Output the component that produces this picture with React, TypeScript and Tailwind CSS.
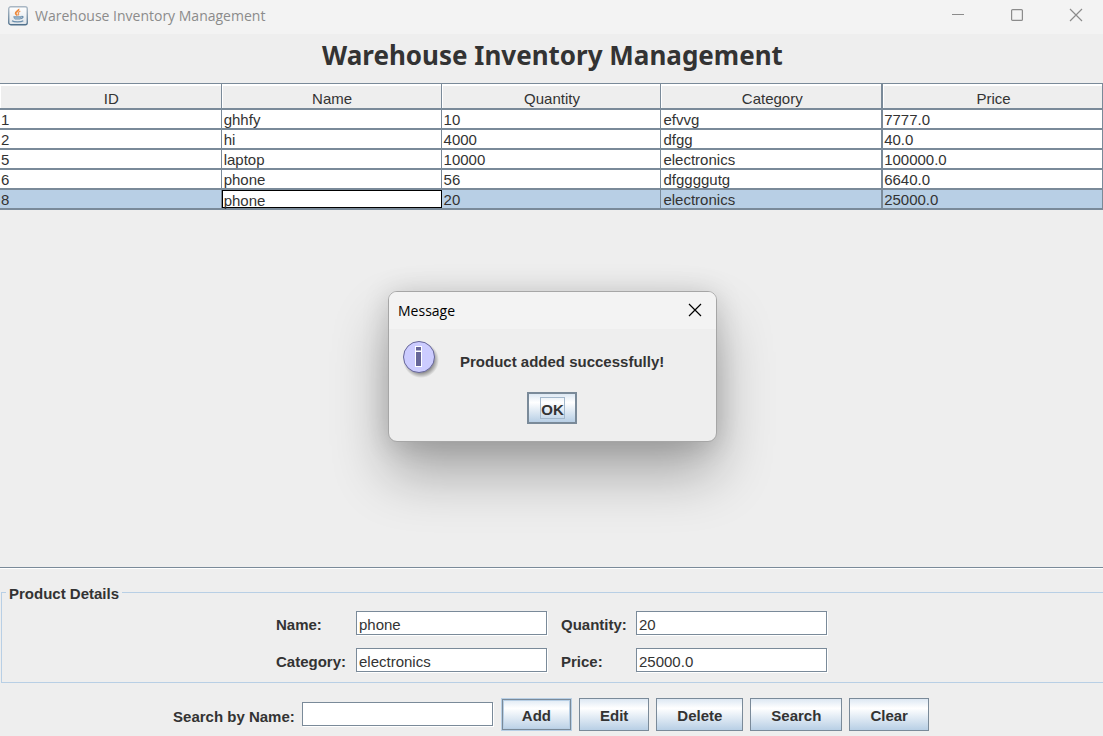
import type { ReactNode } from "react";

type Product = {
  id: number;
  name: string;
  quantity: string;
  category: string;
  price: string;
};

const products: Product[] = [
  { id: 1, name: "ghhfy", quantity: "10", category: "efvvg", price: "7777.0" },
  { id: 2, name: "hi", quantity: "4000", category: "dfgg", price: "40.0" },
  { id: 5, name: "laptop", quantity: "10000", category: "electronics", price: "100000.0" },
  { id: 6, name: "phone", quantity: "56", category: "dfggggutg", price: "6640.0" },
  { id: 8, name: "phone", quantity: "20", category: "electronics", price: "25000.0" },
];

const selectedId = 8;

function JavaIcon() {
  return (
    <svg width="20" height="20" viewBox="0 0 20 20" aria-hidden="true">
      <defs>
        <linearGradient id="java-tile" x1="0" y1="0" x2="0" y2="1">
          <stop offset="0" stopColor="#ffffff" />
          <stop offset="1" stopColor="#dfe4e9" />
        </linearGradient>
        <linearGradient id="java-edge" x1="0" y1="0" x2="0" y2="1">
          <stop offset="0" stopColor="#a9b7c4" />
          <stop offset="1" stopColor="#4f708c" />
        </linearGradient>
      </defs>
      <rect x="0.75" y="0.75" width="18.5" height="18" rx="2" fill="url(#java-tile)" stroke="url(#java-edge)" strokeWidth="1.3" />
      <path d="M10.6 2.8c.9 2-3.4 2.700-3 4.500.2 1 1.300 1.500 1.800 2.200" fill="none" stroke="#ee8a3c" strokeWidth="1.700" />
      <path d="M12.300 5.100c-1.800.8-2.500 1.500-1.900 2.300.5.7.4 1.200-.2 1.900" fill="none" stroke="#ee9a5c" strokeWidth="1.300" />
      <path d="M5.300 10.300h8.200c-.2 2-.8 2.700-1.500 3.200H7.200c-.9-.5-1.700-1.300-1.900-3.200z" fill="#7396b3" />
      <path d="M13.300 10.500c2.500-.5 2.500 1.700-.8 2.200M4 14.800c1.800 1.500 9.300 1.500 11.300 0" fill="none" stroke="#6a8eac" strokeWidth="1.200" />
      <path d="M6.500 12h6" stroke="#e8eef3" strokeWidth=".6" />
    </svg>
  );
}

function InfoIcon() {
  return (
    <svg width="38" height="40" viewBox="0 0 38 40" aria-hidden="true">
      <defs>
        <radialGradient id="info-shadow">
          <stop offset="0.7" stopColor="#000" stopOpacity=".4" />
          <stop offset="1" stopColor="#000" stopOpacity="0" />
        </radialGradient>
      </defs>
      <circle cx="19" cy="20" r="18" fill="url(#info-shadow)" />
      <circle cx="17" cy="17" r="15.500" fill="#ccccff" stroke="#666699" />
      <path d="M13 6h7v21h-7z" fill="#ffffff" />
      <path d="M14 7h5v3.500h-5zM14 12h5v14h-5z" fill="#666699" />
    </svg>
  );
}

function CloseGlyph() {
  return (
    <svg width="14" height="14" viewBox="0 0 14 14" fill="none" stroke="currentColor" strokeWidth="1.200" aria-hidden="true">
      <path d="M1 1l12 12M13 1L1 13" />
    </svg>
  );
}

function TitleBar() {
  return (
    <header className="flex h-[34px] shrink-0 items-start bg-[#f3f3f3] pl-2 text-[#8b8b8b]">
      <div className="flex h-[31px] items-center gap-[7px]">
        <JavaIcon />
        <span className="font-['Open_Sans','Noto_Sans',sans-serif] text-[14px] leading-5">
          Warehouse Inventory Management
        </span>
      </div>
      <div className="mr-[3px] ml-auto flex gap-[11px]">
        <button type="button" aria-label="Minimize" className="flex h-[30px] w-12 items-center justify-center">
          <svg width="12" height="12" viewBox="0 0 12 12" stroke="currentColor" aria-hidden="true">
            <path d="M0 5.500h12" />
          </svg>
        </button>
        <button type="button" aria-label="Maximize" className="flex h-[30px] w-12 items-center justify-center">
          <svg width="12" height="12" viewBox="0 0 12 12" fill="none" stroke="currentColor" aria-hidden="true">
            <rect x=".6" y=".6" width="10.800" height="10.800" rx="1" strokeWidth="1.200" />
          </svg>
        </button>
        <button type="button" aria-label="Close" className="flex h-[30px] w-12 items-center justify-center">
          <CloseGlyph />
        </button>
      </div>
    </header>
  );
}

const headCell =
  "h-[26px] border-b-2 border-[#7a8a99] p-0 pt-1.5 pl-0.5 text-center font-normal shadow-[inset_1px_2px_0_#fff]";
const bodyCell = "h-5 border-b-2 border-[#7a8a99] p-0 pt-0.5 leading-4";

function InventoryTable() {
  return (
    <table className="w-full table-fixed border-separate border-spacing-0">
      <colgroup>
        <col className="w-[20.1%]" />
        <col />
        <col />
        <col className="w-[20.1%]" />
        <col />
      </colgroup>
      <thead>
        <tr>
          <th scope="col" className={`${headCell} border-r`}>ID</th>
          <th scope="col" className={`${headCell} border-r`}>Name</th>
          <th scope="col" className={`${headCell} border-r`}>Quantity</th>
          <th scope="col" className={`${headCell} border-r-2`}>Category</th>
          <th scope="col" className={`${headCell} border-r`}>Price</th>
        </tr>
      </thead>
      <tbody>
        {products.map((p) => {
          const selected = p.id === selectedId;
          return (
            <tr key={p.id} className={selected ? "bg-[#b8cfe5]" : "bg-white"}>
              <td className={`${bodyCell} border-r pl-px`}>{p.id}</td>
              {selected ? (
                <td className="h-5 border-b-2 border-[#7a8a99] bg-white p-0">
                  <div className="h-[18px] border border-black pt-0.5 pl-px leading-4">{p.name}</div>
                </td>
              ) : (
                <td className={`${bodyCell} border-r pl-0.5`}>{p.name}</td>
              )}
              <td className={`${bodyCell} border-r pl-0.5`}>{p.quantity}</td>
              <td className={`${bodyCell} border-r-2 pl-0.5`}>{p.category}</td>
              <td className={`${bodyCell} border-r pl-px`}>{p.price}</td>
            </tr>
          );
        })}
      </tbody>
    </table>
  );
}

function TextField({ id, value }: { id: string; value: string }) {
  return (
    <input
      id={id}
      type="text"
      defaultValue={value}
      className="h-6 w-[191px] rounded-none border border-[#7a8a99] bg-white pt-0.5 pl-0.5 shadow-[1px_1px_0_#fff] outline-none"
    />
  );
}

function FieldLabel({ htmlFor, children }: { htmlFor: string; children: ReactNode }) {
  return (
    <label htmlFor={htmlFor} className="pt-[5px] font-bold whitespace-nowrap">
      {children}
    </label>
  );
}

const buttonFace =
  "bg-linear-to-b from-[#dde8f3] via-white via-30% to-[#b8cfe5] font-bold";

function ActionButton({ children }: { children: ReactNode }) {
  return (
    <button type="button" className={`${buttonFace} h-[33px] border border-[#7a8a99] px-5 pt-0.5`}>
      {children}
    </button>
  );
}

function MessageDialog() {
  return (
    <div className="absolute inset-0 flex items-center justify-center pb-1 pl-0.5">
      <div
        role="dialog"
        aria-labelledby="dialog-title"
        className="w-[329px] overflow-hidden rounded-[9px] border border-[#a6a6a6] bg-[#eeeeee] shadow-[0_32px_56px_rgba(0,0,0,0.3),0_2px_28px_rgba(0,0,0,0.14)]"
      >
        <div className="flex h-[37px] items-center justify-between bg-[#f3f3f3] pr-[14px] pl-[9px] text-black">
          <h2 id="dialog-title" className="pt-px font-['Open_Sans','Noto_Sans',sans-serif] text-[14px]">
            Message
          </h2>
          <button type="button" aria-label="Close message">
            <CloseGlyph />
          </button>
        </div>
        <div className="flex h-[63px] items-start gap-5 pt-[11px] pl-[13px]">
          <InfoIcon />
          <p className="pt-[13px] leading-[18px] font-bold">Product added successfully!</p>
        </div>
        <div className="flex h-[49px] items-start justify-center pr-0.5">
          <button
            type="button"
            className={`${buttonFace} flex h-8 w-[50px] items-start justify-center border-2 border-[#7a8a99] pt-[3px] pl-0.5`}
          >
            <span className="h-[22px] border border-[#a3b8cc] leading-6">OK</span>
          </button>
        </div>
      </div>
    </div>
  );
}

export default function App() {
  return (
    <div className="relative flex min-h-screen flex-col bg-[#eeeeee] font-['Liberation_Sans',Arial,sans-serif] text-[15px] leading-[18px] text-[#333333]">
      <TitleBar />
      <h1 className="flex h-[49px] shrink-0 items-start justify-center pl-0.5 font-['Noto_Sans','Open_Sans',sans-serif] text-[26px] leading-[42px] font-bold">
        Warehouse Inventory Management
      </h1>
      <main className="flex flex-1 flex-col">
        <div className="flex-1 border-y border-[#7a8a99] shadow-[0_1px_0_#fff]">
          <InventoryTable />
        </div>
        <form className="shrink-0 pt-[17px]">
          <fieldset className="ml-px h-[98px] border border-r-0 border-[#b8cfe5]">
            <legend className="ml-1 h-[15px] px-[3px] font-bold">Product Details</legend>
            <div className="grid grid-cols-[70px_195px_65px_191px] justify-center gap-x-2.5 gap-y-[13px] pt-[11px] pr-0.5">
              <FieldLabel htmlFor="name">Name:</FieldLabel>
              <TextField id="name" value="phone" />
              <FieldLabel htmlFor="quantity">Quantity:</FieldLabel>
              <TextField id="quantity" value="20" />
              <FieldLabel htmlFor="category">Category:</FieldLabel>
              <TextField id="category" value="electronics" />
              <FieldLabel htmlFor="price">Price:</FieldLabel>
              <TextField id="price" value="25000.0" />
            </div>
          </fieldset>
          <div className="flex items-center justify-center gap-[7px] pt-[15px] pr-px pb-[5px]">
            <FieldLabel htmlFor="search">Search by Name:</FieldLabel>
            <div className="flex pr-px pb-px">
              <TextField id="search" value="" />
            </div>
            <button
              type="button"
              className={`${buttonFace} h-[33px] border border-[#b8cfe5] px-5 pt-0.5 shadow-[inset_0_0_0_1px_#7a8a99,inset_0_0_0_2px_#b8cfe5]`}
            >
              Add
            </button>
            <ActionButton>Edit</ActionButton>
            <ActionButton>Delete</ActionButton>
            <ActionButton>Search</ActionButton>
            <ActionButton>Clear</ActionButton>
          </div>
        </form>
      </main>
      <MessageDialog />
    </div>
  );
}
